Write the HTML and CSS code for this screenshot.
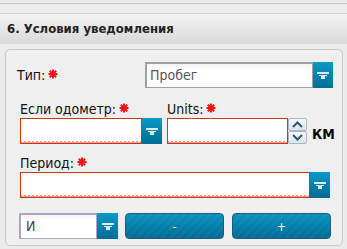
FILE: index.html
```html
<!DOCTYPE html>
<html lang="ru">
<head>
  <meta charset="UTF-8">
  <title>Условия уведомления</title>
  <link rel="stylesheet" href="styles.css">
</head>
<body>

  <div class="topbar"></div>
  <div class="tabbar"></div>
  <div class="section-head">6. Условия уведомления</div>

  <div class="panel">
    <div class="row row-type">
      <div class="label label-type">Тип:<svg class="req" width="10" height="10" viewBox="0 0 10 10"><path d="M5 0.5v9M0.5 5h9M1.8 1.8l6.4 6.4M8.2 1.8l-6.4 6.4"/></svg></div>
      <div class="combo combo-type">
        <div class="combo-field plain">Пробег</div>
        <div class="combo-btn"><svg width="12" height="8" viewBox="0 0 12 8"><rect x="0" y="0" width="12" height="2"/><rect x="2" y="3" width="8" height="1"/><rect x="4" y="4" width="4" height="3"/></svg></div>
      </div>
    </div>

    <div class="row row-odo">
      <div class="field">
        <div class="label">Если одометр:<svg class="req" width="10" height="10" viewBox="0 0 10 10"><path d="M5 0.5v9M0.5 5h9M1.8 1.8l6.4 6.4M8.2 1.8l-6.4 6.4"/></svg></div>
        <div class="combo combo-odo">
          <div class="combo-field invalid"></div>
          <div class="combo-btn"><svg width="12" height="8" viewBox="0 0 12 8"><rect x="0" y="0" width="12" height="2"/><rect x="2" y="3" width="8" height="1"/><rect x="4" y="4" width="4" height="3"/></svg></div>
        </div>
      </div>
      <div class="field">
        <div class="label">Units:<svg class="req" width="10" height="10" viewBox="0 0 10 10"><path d="M5 0.5v9M0.5 5h9M1.8 1.8l6.4 6.4M8.2 1.8l-6.4 6.4"/></svg></div>
        <div class="units">
          <div class="combo-field invalid units-field"></div>
          <div class="spinner">
            <div class="spin"><svg width="11" height="7" viewBox="0 0 11 7"><path d="M1 6l4.5-4.5L10 6"/></svg></div>
            <div class="spin"><svg width="11" height="7" viewBox="0 0 11 7"><path d="M1 1l4.5 4.5L10 1"/></svg></div>
          </div>
          <span class="unit">КМ</span>
        </div>
      </div>
    </div>

    <div class="field field-period">
      <div class="label">Период:<svg class="req" width="10" height="10" viewBox="0 0 10 10"><path d="M5 0.5v9M0.5 5h9M1.8 1.8l6.4 6.4M8.2 1.8l-6.4 6.4"/></svg></div>
      <div class="combo combo-period">
        <div class="combo-field invalid"></div>
        <div class="combo-btn"><svg width="12" height="8" viewBox="0 0 12 8"><rect x="0" y="0" width="12" height="2"/><rect x="2" y="3" width="8" height="1"/><rect x="4" y="4" width="4" height="3"/></svg></div>
      </div>
    </div>

    <div class="row row-actions">
      <div class="combo combo-op">
        <div class="combo-field op-field">И</div>
        <div class="combo-btn"><svg width="12" height="8" viewBox="0 0 12 8"><rect x="0" y="0" width="12" height="2"/><rect x="2" y="3" width="8" height="1"/><rect x="4" y="4" width="4" height="3"/></svg></div>
      </div>
      <button class="btn">-</button>
      <button class="btn">+</button>
    </div>
  </div>

</body>
</html>
```

FILE: styles.css
```css
body {
  margin: 0;
  background: #ebebeb;
  font-family: "DejaVu Sans Condensed", "DejaVu Sans", sans-serif;
  font-size: 14px;
  color: #111;
}

.topbar {
  height: 3px;
  border-bottom: 1px solid #c4c4c4;
}

.tabbar {
  height: 9px;
  border-bottom: 1px solid #d2d2d2;
  background: #ececec;
}

.section-head {
  height: 30px;
  line-height: 30px;
  padding-left: 7px;
  font-weight: bold;
  font-size: 13px;
  color: #222;
  background: linear-gradient(to bottom, #f3f3f3, #d9d9d9);
}

.panel {
  margin: 5px 4px 0 5px;
  padding: 12px 10px 6px 14px;
  border: 1px solid #c9c9c9;
  border-radius: 5px;
  background: #efefef;
}

.row {
  display: flex;
}

.row-type {
  align-items: center;
  height: 26px;
}

.label {
  height: 16px;
  line-height: 16px;
  margin-bottom: 1px;
  white-space: nowrap;
}

.label-type {
  flex: 1;
  margin: 0 0 0 -3px;
}

.req {
  margin-left: 3px;
  vertical-align: 1px;
}

.req path {
  stroke: #ff1010;
  stroke-width: 2;
  fill: none;
}

.combo {
  display: flex;
  height: 26px;
}

.combo-type {
  width: 188px;
  margin-right: -1px;
}

.combo-odo {
  width: 142px;
}

.combo-period {
  width: 310px;
}

.combo-field {
  flex: 1;
  box-sizing: border-box;
  background: linear-gradient(to bottom, #f4f4f4, #fff 6px);
}

.plain {
  border: 1px solid #a0a0a0;
  border-width: 2px 1px 1px 2px;
  padding-left: 3px;
  line-height: 22px;
  color: #555;
}

.invalid {
  border: 1px solid #cc3a0c;
  background:
    linear-gradient(45deg, #f49a9a 2px, transparent 0) 0 100% / 4px 3px repeat-x,
    linear-gradient(-45deg, #f49a9a 2px, transparent 0) 0 100% / 4px 3px repeat-x,
    #fff;
}

.combo-btn {
  width: 20px;
  display: flex;
  align-items: center;
  justify-content: center;
  padding-top: 1px;
  box-sizing: border-box;
  background: linear-gradient(to bottom, #0a9ac6, #006b93);
}

.combo-btn rect {
  fill: #fff;
  opacity: 0.85;
}

.row-odo {
  margin-top: 13px;
  gap: 5px;
}

.units {
  display: flex;
  align-items: center;
  height: 26px;
}

.units-field {
  width: 121px;
  height: 26px;
  flex: none;
}

.spinner {
  display: flex;
  flex-direction: column;
  width: 19px;
  height: 26px;
}

.spin {
  flex: 1;
  display: flex;
  align-items: center;
  justify-content: center;
  border: 1px solid #aab6c4;
  border-radius: 2px;
  background: linear-gradient(to bottom, #f3f6f9, #dde4ec);
}

.spin path {
  stroke: #2e5777;
  stroke-width: 2;
  fill: none;
}

.unit {
  margin: 6px 0 0 5px;
  font-weight: bold;
  font-size: 14px;
  color: #000;
}

.field-period {
  margin-top: 11px;
}

.row-actions {
  margin-top: 15px;
  align-items: stretch;
  height: 26px;
}

.combo-op {
  width: 99px;
  margin-left: -1px;
}

.combo-op .combo-btn {
  width: 21px;
}

.op-field {
  border: 1px solid #a8a8c0;
  border-width: 2px 1px 1px 2px;
  padding-left: 5px;
  line-height: 22px;
  color: #444;
}

.btn {
  width: 99px;
  margin-left: 7px;
  border: 1px solid #1e5a79;
  border-radius: 4px;
  color: #fff;
  font-family: inherit;
  font-size: 13px;
  background:
    repeating-linear-gradient(-45deg, rgba(255, 255, 255, 0.025) 0 3px, rgba(0, 0, 0, 0.02) 3px 6px),
    linear-gradient(to bottom, #0a93c2, #006e96);
}

.btn + .btn {
  margin-left: 8px;
}
```
